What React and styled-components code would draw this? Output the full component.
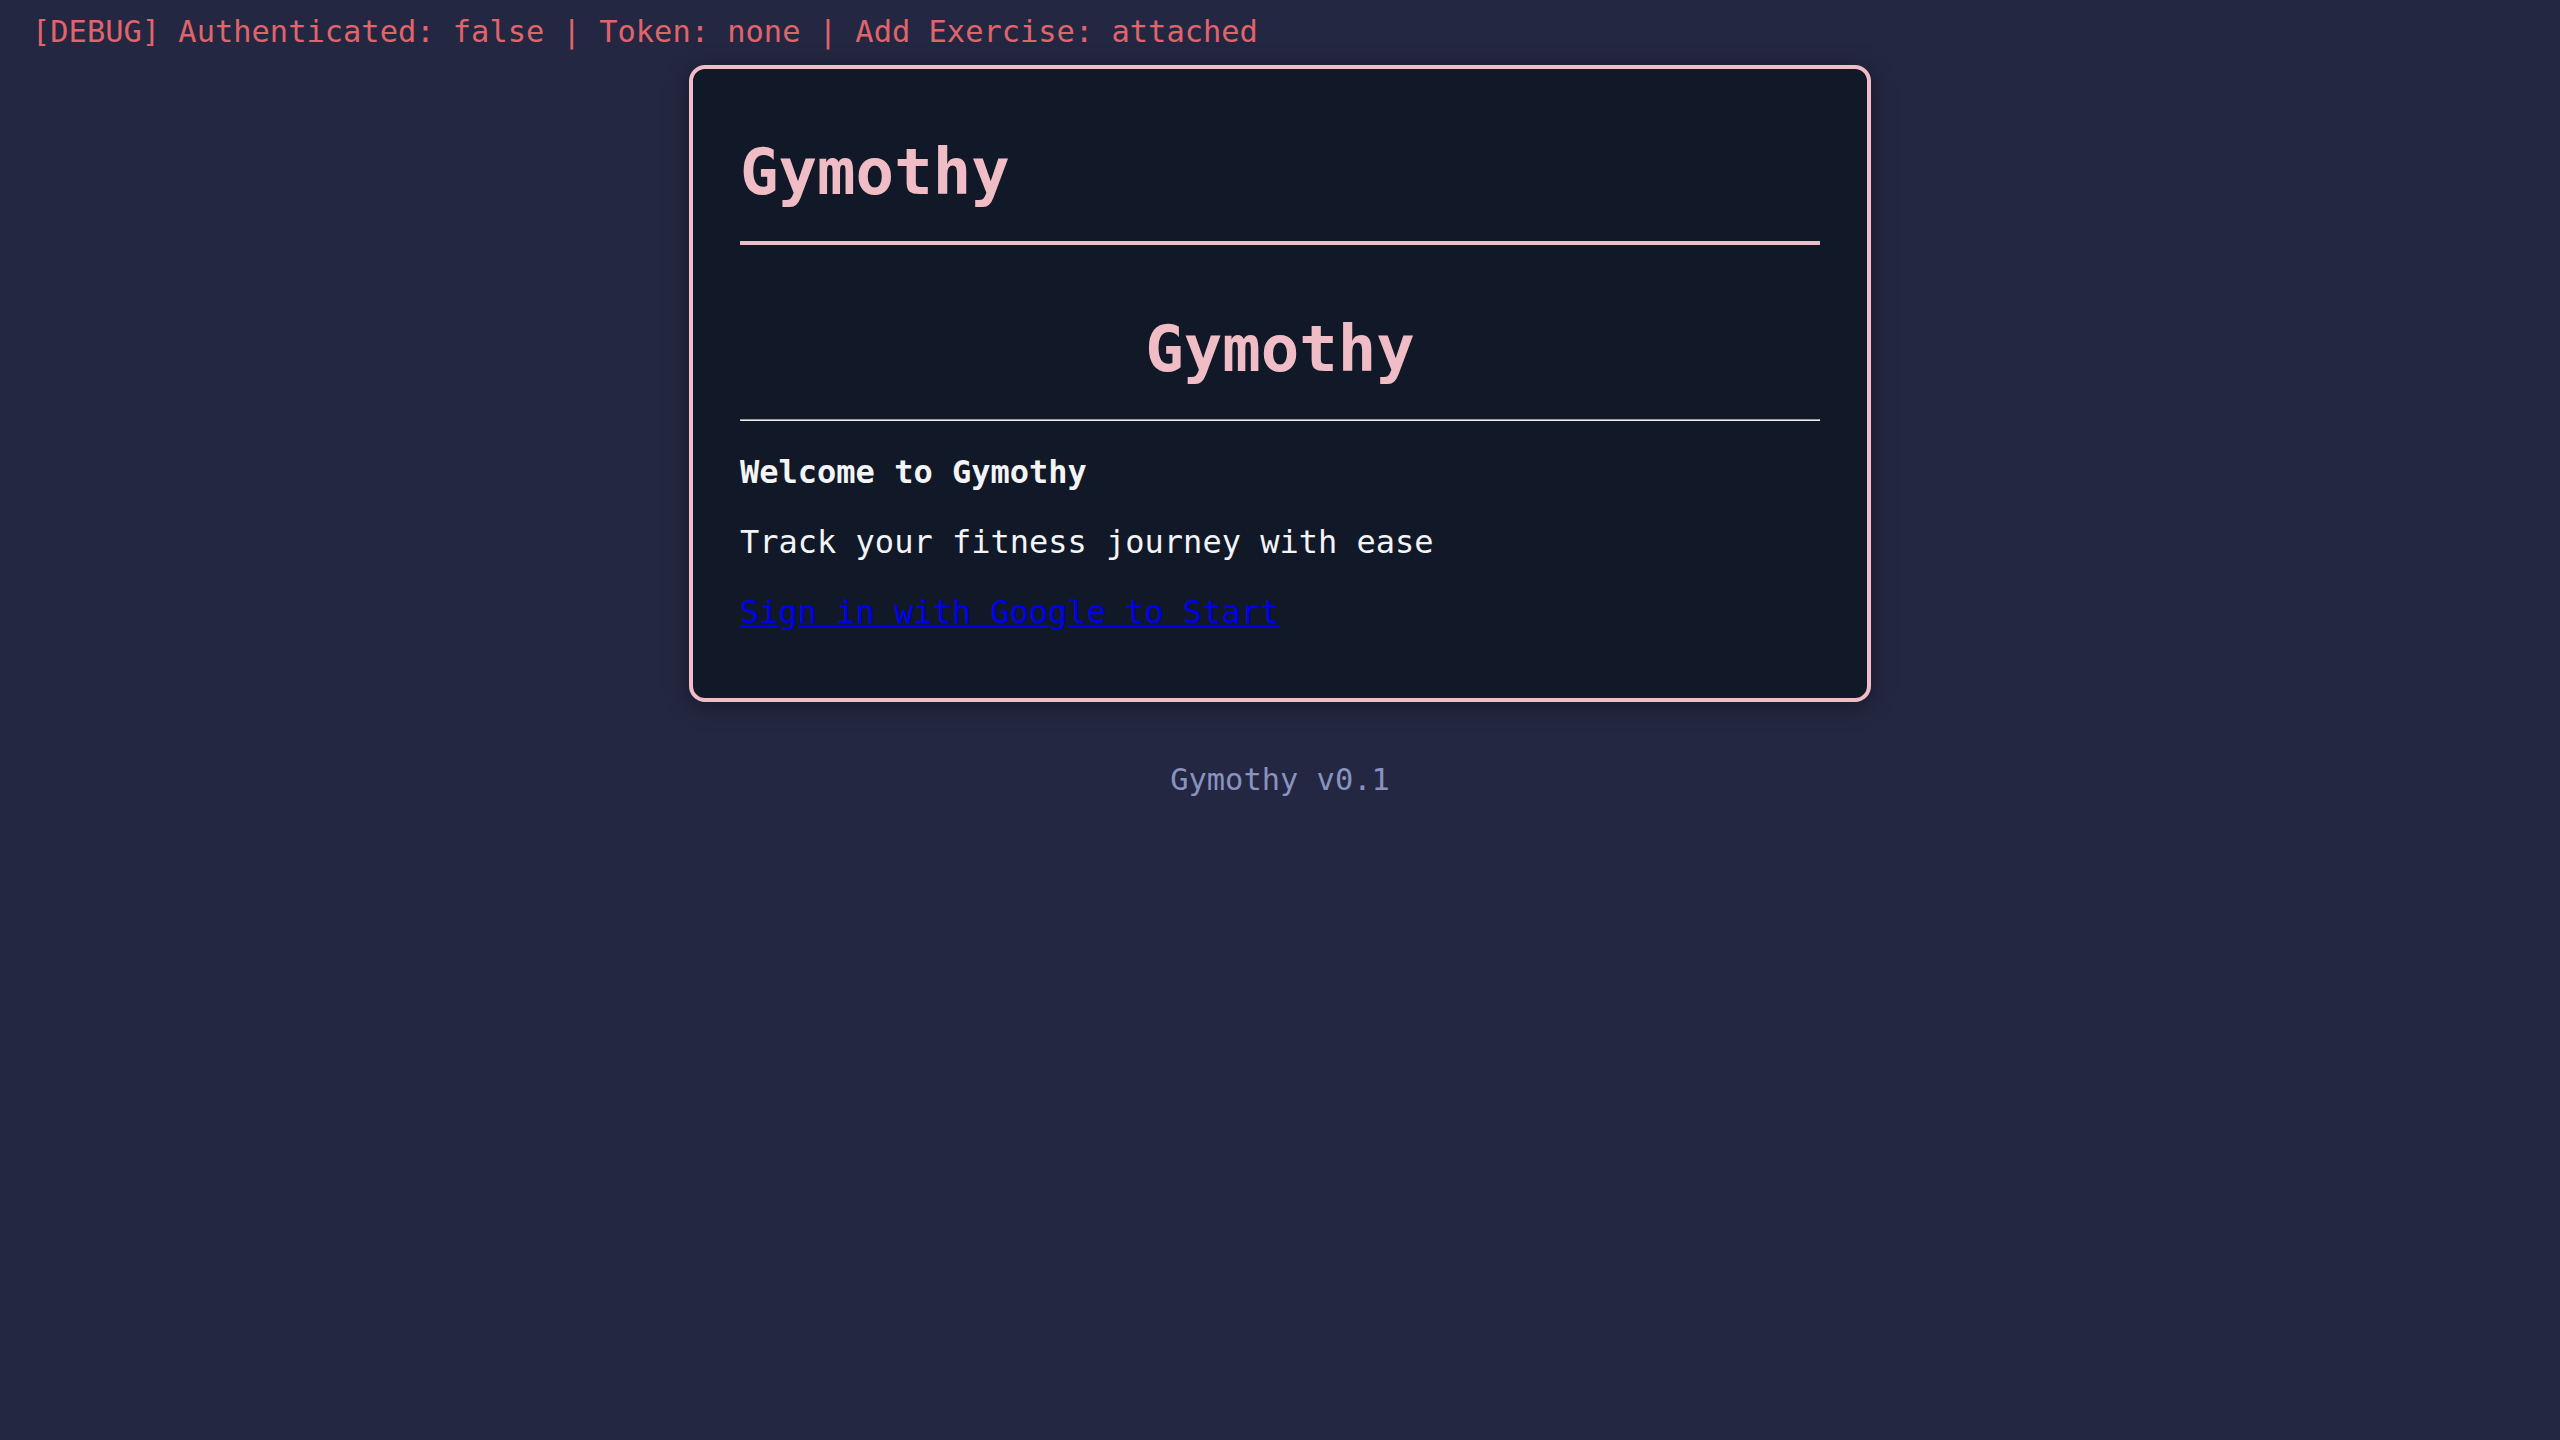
import React from 'react'
import styled, { createGlobalStyle } from 'styled-components'

const GlobalStyle = createGlobalStyle`
    body {
        margin: 0;
        background-color: #232741;
        font-family: "DejaVu Sans Mono", "Liberation Mono", monospace;
        font-size: 32px;
        color: #f3f4f6;
    }
`

const Page = styled.div`
    min-height: 100vh;
    display: flex;
    flex-direction: column;
`

const DebugLine = styled.div`
    color: #e0646b;
    font-size: 0.95em;
    padding: 14px 32px 0;
`

const Card = styled.main`
    box-sizing: border-box;
    width: 1182px;
    margin: 16px auto 0;
    padding: 32px 47px 35px;
    background-color: #111827;
    border: 4px solid #f0bcc5;
    border-radius: 16px;
    box-shadow: 0 4px 24px rgba(0, 0, 0, 0.35);
`

const Header = styled.header`
    border-bottom: 4px solid #f0bcc5;
`

const Title = styled.h1`
    margin: ${(p) => (p.center ? '67px 0 33px' : '34px 0 32px')};
    font-size: 64px;
    font-weight: bold;
    color: #f0bcc5;
    text-align: ${(p) => (p.center ? 'center' : 'left')};
`

const Divider = styled.hr`
    margin: 0;
`

const Text = styled.p`
    margin: 32px 0;
`

const SignIn = styled.a`
    color: #0000ee;
    text-decoration: underline;
`

const Footer = styled.footer`
    margin-top: 60px;
    text-align: center;
    color: #8a92bf;
    font-size: 0.95em;
`

function App() {
    return (
        <>
            <GlobalStyle />
            <Page>
                <DebugLine>[DEBUG] Authenticated: false | Token: none | Add Exercise: attached</DebugLine>
                <Card>
                    <Header>
                        <Title>Gymothy</Title>
                    </Header>
                    <Title center>Gymothy</Title>
                    <Divider />
                    <Text><strong>Welcome to Gymothy</strong></Text>
                    <Text>Track your fitness journey with ease</Text>
                    <Text><SignIn href="#">Sign in with Google to Start</SignIn></Text>
                </Card>
                <Footer>Gymothy v0.1</Footer>
            </Page>
        </>
    )
}

export default App
